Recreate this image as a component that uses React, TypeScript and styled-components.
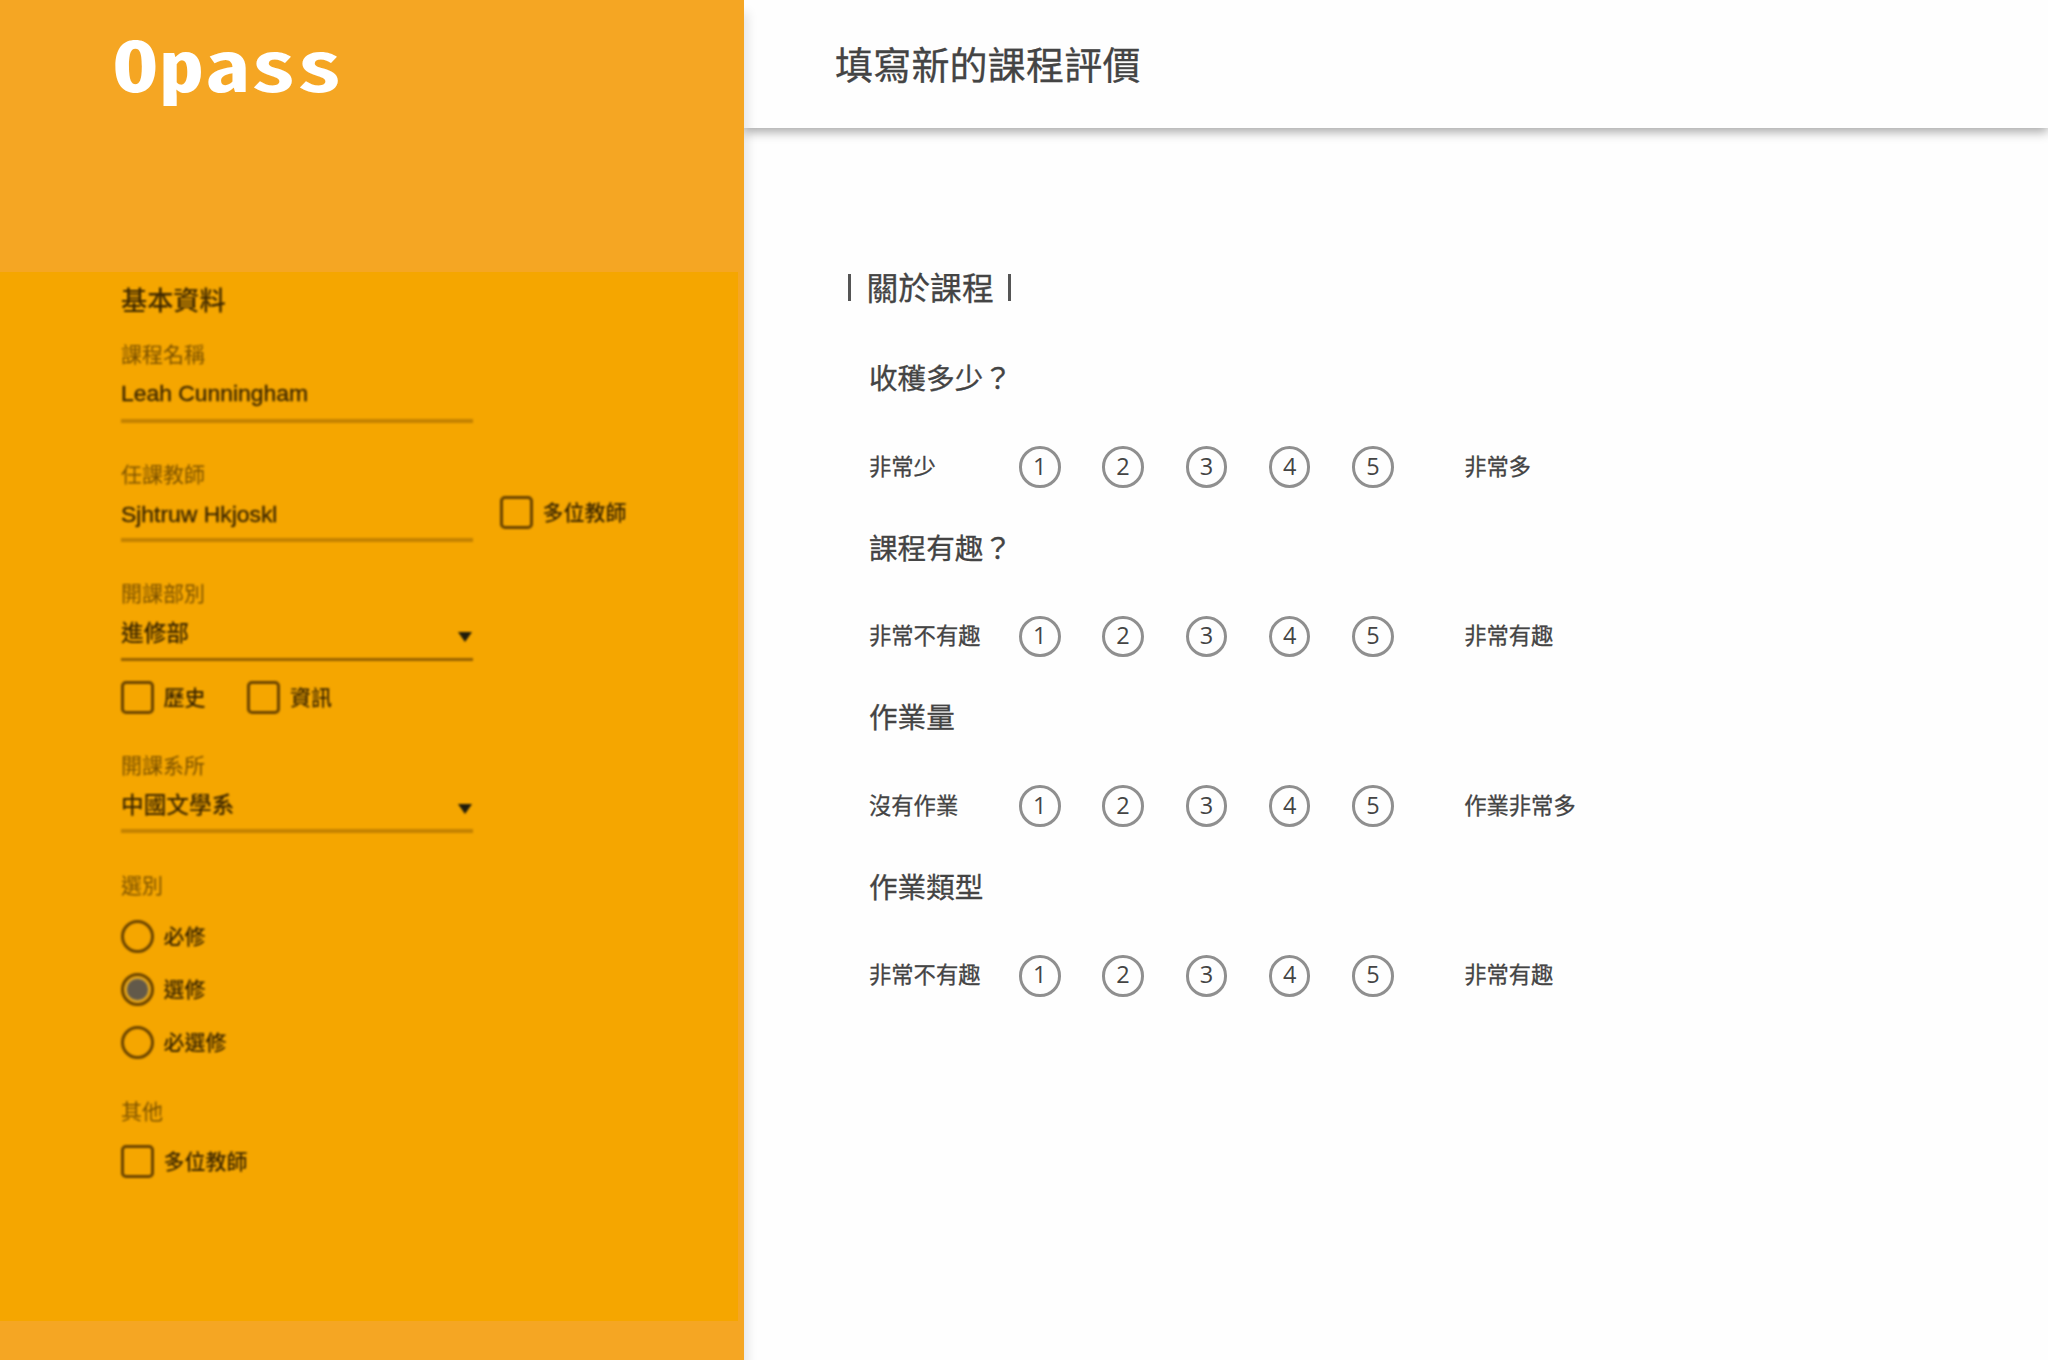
import React from 'react';
import styled, { createGlobalStyle } from 'styled-components';

const cjk = '"Noto Sans CJK TC", sans-serif';

const GlobalStyle = createGlobalStyle`
  * { box-sizing: border-box; }
  body { margin: 0; background: #fefefe; }
`;

const Page = styled.div`
  display: flex;
  width: 2048px;
  height: 1360px;
  overflow: hidden;
  background: #fefefe;
  font-family: ${cjk};
  color: #444;
`;

const Sidebar = styled.aside`
  position: relative;
  z-index: 2;
  display: flex;
  flex-direction: column;
  flex: none;
  width: 744px;
  height: 1360px;
  background: #f5a623;
  box-shadow: 4px 12px 10px rgba(0, 0, 0, 0.1);
`;

const Brand = styled.div`
  height: 272px;
  padding: 12px 0 0 112.5px;
  font-family: "Noto Sans Mono CJK TC", "Liberation Mono", monospace;
  font-weight: 700;
  font-size: 69px;
  line-height: 100px;
  letter-spacing: 0.9px;
  color: #fff;
  white-space: nowrap;
`;

const Wordmark = styled.span`
  display: inline-block;
  transform: scaleX(1.3);
  transform-origin: left center;
`;

const Panel = styled.section`
  width: 738px;
  height: 1049px;
  background: #f5a600;
`;

const Form = styled.form`
  display: flex;
  flex-direction: column;
  padding: 14px 0 0 121px;
  color: #3c2700;
  font-family: "Liberation Sans", ${cjk};
  font-weight: 500;
  filter: blur(0.8px);
`;

const FormTitle = styled.h2`
  margin: 0 0 26px;
  font-size: 26.2px;
  line-height: 30px;
  font-weight: 500;
`;

const FieldRow = styled.div<{ $after: number }>`
  display: flex;
  gap: 27px;
  margin-bottom: ${(p) => p.$after}px;
`;

const Field = styled.div<{ $thin?: boolean }>`
  display: flex;
  flex-direction: column;
  width: 352px;
  height: 80.5px;
  border-bottom: ${(p) => (p.$thin ? '3px solid #966200' : '4px solid #c38200')};
`;

const Label = styled.div`
  height: 26px;
  font-size: 21px;
  line-height: 26px;
  font-weight: 400;
  color: #7c5200;
`;

const Value = styled.div<{ $latin?: boolean; $drop?: number }>`
  display: flex;
  align-items: center;
  justify-content: space-between;
  height: 50px;
  padding-top: ${(p) => p.$drop ?? 0}px;
  font-size: ${(p) => (p.$latin ? 22.9 : 22.7)}px;
  line-height: ${(p) => (p.$latin ? 26 : 34)}px;
  -webkit-text-stroke: ${(p) => (p.$latin ? '0.35px' : '0')};
`;

const Arrow = styled.i`
  width: 0;
  height: 0;
  margin: 7px 1px 0 0;
  border: 7.5px solid transparent;
  border-top: 10px solid #1f1c0c;
  border-bottom: 0;
`;

const Choices = styled.div<{ $column?: boolean; $top?: number; $after?: number }>`
  display: flex;
  flex-direction: ${(p) => (p.$column ? 'column' : 'row')};
  gap: ${(p) => (p.$column ? 19.8 : 41.5)}px;
  margin: ${(p) => p.$top ?? 0}px 0 ${(p) => p.$after ?? 0}px -0.5px;
`;

const Choice = styled.label`
  display: flex;
  align-items: center;
  gap: 10px;
  height: 33px;
  font-size: 21px;
  line-height: 33px;
`;

const Box = styled.span`
  width: 33px;
  height: 33px;
  border: 3px solid #6a4400;
  border-radius: 5px;
`;

const Radio = styled.span`
  display: flex;
  align-items: center;
  justify-content: center;
  width: 33px;
  height: 33px;
  border: 3px solid #6a4400;
  border-radius: 50%;
`;

const Dot = styled.span`
  width: 25px;
  height: 25px;
  border: 2px solid #d3a02c;
  border-radius: 50%;
  background: #62594a;
`;

const Main = styled.main`
  display: flex;
  flex-direction: column;
  flex: 1;
  -webkit-text-stroke: 0.3px #444;
`;

const Header = styled.header`
  height: 128px;
  padding-left: 91px;
  background: #fefefe;
  box-shadow: 0 4px 10px rgba(0, 0, 0, 0.34);
`;

const Title = styled.h1`
  margin: 0;
  font-size: 38px;
  line-height: 126px;
  font-weight: 400;
  letter-spacing: 0.2px;
`;

const Survey = styled.div`
  padding: 137px 0 0 104px;
`;

const SectionTitle = styled.h2`
  display: flex;
  align-items: center;
  height: 44px;
  margin: 0;
  font-size: 31.8px;
  font-weight: 400;
`;

const SectionName = styled.span`
  padding: 0 14.5px 2px 15.5px;
  line-height: 42px;
`;

const Bar = styled.span`
  width: 3px;
  height: 27px;
  background: #555;
`;

const Questions = styled.div`
  padding: 48px 0 0 21px;
`;

const Question = styled.section`
  height: 169.6px;
`;

const Prompt = styled.h3`
  margin: 0;
  height: 40px;
  font-size: 28.6px;
  line-height: 40px;
  font-weight: 400;
`;

const Scale = styled.div`
  display: flex;
  align-items: center;
  height: 42px;
  margin-top: 49px;
  font-size: 22.3px;
`;

const LowEnd = styled.span`
  width: 150px;
  line-height: 38px;
  padding-bottom: 5px;
`;

const Options = styled.div`
  display: flex;
  gap: 41.7px;
  margin-right: 70.5px;
`;

const Option = styled.button`
  width: 41.6px;
  height: 41.6px;
  padding: 0 0 3px;
  border: 3px solid #8f8f8f;
  border-radius: 50%;
  background: transparent;
  font-family: "Open Sans", sans-serif;
  font-size: 23.5px;
  line-height: 32px;
  color: #444;
  text-align: center;
  -webkit-text-stroke: 0;
`;

const HighEnd = styled.span`
  line-height: 38px;
  padding-bottom: 5px;
`;

const questions = [
  { prompt: '收穫多少？', low: '非常少', high: '非常多' },
  { prompt: '課程有趣？', low: '非常不有趣', high: '非常有趣' },
  { prompt: '作業量', low: '沒有作業', high: '作業非常多' },
  { prompt: '作業類型', low: '非常不有趣', high: '非常有趣' },
];

const Check = ({ text }: { text: string }) => (
  <Choice><Box />{text}</Choice>
);

export default function App() {
  return (
    <>
      <GlobalStyle />
      <Page>
        <Sidebar>
          <Brand><Wordmark>Opass</Wordmark></Brand>
          <Panel>
            <Form>
              <FormTitle>基本資料</FormTitle>
              <FieldRow $after={39}>
                <Field>
                  <Label>課程名稱</Label>
                  <Value $latin>Leah Cunningham</Value>
                </Field>
              </FieldRow>
              <FieldRow $after={38.5}>
                <Field>
                  <Label>任課教師</Label>
                  <Value $latin $drop={2}>Sjhtruw Hkjoskl</Value>
                </Field>
                <Choices $top={34.5}><Check text="多位教師" /></Choices>
              </FieldRow>
              <FieldRow $after={0}>
                <Field $thin>
                  <Label>開課部別</Label>
                  <Value $drop={3}>進修部<Arrow /></Value>
                </Field>
              </FieldRow>
              <Choices $top={19.5} $after={39}>
                <Check text="歷史" />
                <Check text="資訊" />
              </Choices>
              <FieldRow $after={39.5}>
                <Field>
                  <Label>開課系所</Label>
                  <Value $drop={3}>中國文學系<Arrow /></Value>
                </Field>
              </FieldRow>
              <Label>選別</Label>
              <Choices $column $top={21.5} $after={40}>
                <Choice><Radio />必修</Choice>
                <Choice><Radio><Dot /></Radio>選修</Choice>
                <Choice><Radio />必選修</Choice>
              </Choices>
              <Label>其他</Label>
              <Choices $top={20}><Check text="多位教師" /></Choices>
            </Form>
          </Panel>
        </Sidebar>
        <Main>
          <Header><Title>填寫新的課程評價</Title></Header>
          <Survey>
            <SectionTitle><Bar /><SectionName>關於課程</SectionName><Bar /></SectionTitle>
            <Questions>
              {questions.map((q) => (
                <Question key={q.prompt}>
                  <Prompt>{q.prompt}</Prompt>
                  <Scale>
                    <LowEnd>{q.low}</LowEnd>
                    <Options>
                      {[1, 2, 3, 4, 5].map((n) => <Option key={n} type="button">{n}</Option>)}
                    </Options>
                    <HighEnd>{q.high}</HighEnd>
                  </Scale>
                </Question>
              ))}
            </Questions>
          </Survey>
        </Main>
      </Page>
    </>
  );
}
